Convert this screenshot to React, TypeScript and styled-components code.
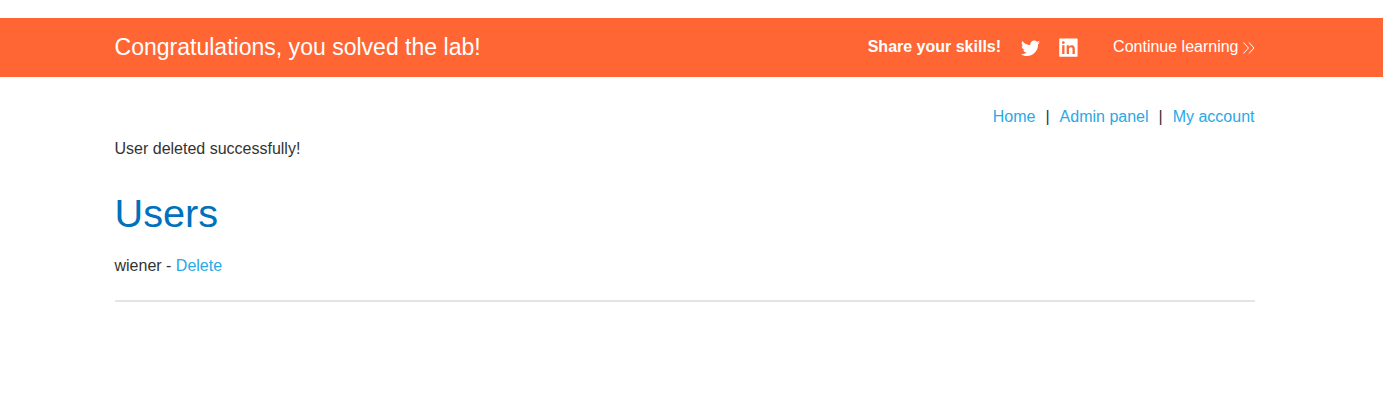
import React from 'react';
import styled, { createGlobalStyle } from 'styled-components';

const GlobalStyle = createGlobalStyle`
  * { box-sizing: border-box; }
  body {
    margin: 0;
    background: #fff;
    color: #333332;
    font: 16px/24px "Liberation Sans", Arial, sans-serif;
  }
`;

const Banner = styled.header`
  margin-top: 18px;
  height: 59px;
  background: #ff6633;
  color: #fff;
`;

const Container = styled.div`
  width: 1140px;
  margin-left: 114.5px;
`;

const BannerRow = styled(Container)`
  height: 100%;
  display: flex;
  align-items: center;
`;

const BannerTitle = styled.h4`
  margin: 0 auto 0 0;
  padding-bottom: 1px;
  font-size: 23.04px;
  font-weight: 400;
  line-height: 30px;
`;

const Share = styled.span`
  font-weight: 700;
  margin-right: 18px;
  padding-bottom: 2px;
`;

const IconLink = styled.a<{ $gap: number }>`
  display: flex;
  margin-right: ${(p) => p.$gap}px;
`;

const Continue = styled.a`
  display: flex;
  align-items: center;
  gap: 4px;
`;

const ContinueLabel = styled.span`
  padding-bottom: 2px;
`;

const Nav = styled.nav`
  display: flex;
  justify-content: flex-end;
  gap: 10px;
  padding-top: 28px;
`;

const Link = styled.a`
  color: #29a9e5;
`;

const Message = styled.p`
  margin: 8px 0 0;
`;

const Title = styled.h1`
  margin: 27px 0 0;
  color: #0071bc;
  font-size: 39.7px;
  font-weight: 400;
  line-height: 50px;
`;

const UserRow = styled.div`
  margin-top: 16px;
`;

const Rule = styled.hr`
  margin: 22px 0 0;
  border: 0;
  height: 2px;
  background: #e4e4e4;
`;

export default function App() {
  return (
    <>
      <GlobalStyle />
      <Banner>
        <BannerRow>
          <BannerTitle>Congratulations, you solved the lab!</BannerTitle>
          <Share>Share your skills!</Share>
          <IconLink $gap={17}>
            <svg width="22" height="22" viewBox="-0.5 0.3 24 24" fill="#fff">
              <path d="M22.46 6c-.77.35-1.6.58-2.46.69.88-.53 1.56-1.37 1.88-2.38-.83.5-1.75.85-2.72 1.05C18.37 4.5 17.26 4 16 4c-2.35 0-4.27 1.92-4.27 4.29 0 .34.04.67.11.98C8.28 9.09 5.11 7.38 3 4.79c-.37.63-.58 1.37-.58 2.15 0 1.49.75 2.81 1.91 3.56-.71 0-1.37-.2-1.95-.5v.03c0 2.08 1.48 3.82 3.44 4.21a4.22 4.22 0 0 1-1.93.07 4.28 4.28 0 0 0 4 2.98 8.521 8.521 0 0 1-5.33 1.84c-.34 0-.68-.02-1.02-.06C3.44 20.29 5.7 21 8.12 21 16 21 20.33 14.46 20.33 8.79c0-.19 0-.37-.01-.56.84-.6 1.56-1.36 2.14-2.23z" />
            </svg>
          </IconLink>
          <IconLink $gap={35}>
            <svg width="20" height="20" viewBox="-0.5 0.4 24 24" fill="#fff">
              <path d="M22.2 1H1.8C1.3 1 1 1.3 1 1.8v20.4c0 .5.3.8.8.8h20.4c.5 0 .8-.3.8-.8V1.8c0-.5-.3-.8-.8-.8zM7.3 19.7H4.5V9.2h2.8v10.5zM5.9 7.6a1.7 1.7 0 1 1 0-3.4 1.7 1.7 0 0 1 0 3.4zm13.8 12.1h-2.8v-5.1c0-1.4 0-3.1-1.9-3.1s-2.3 1.5-2.3 3v5.2H9.9V9.2h2.7v1.5c.4-.8 1.5-1.7 3.1-1.7 3.3 0 4 2.2 4 5v5.7z" />
            </svg>
          </IconLink>
          <Continue>
            <ContinueLabel>Continue learning</ContinueLabel>
            <svg width="12" height="14" viewBox="0 0 12 14" fill="none" stroke="#fff">
              <path d="M.5 1.5L5.5 7 .5 12.5M6 1.5L11 7 6 12.5" />
            </svg>
          </Continue>
        </BannerRow>
      </Banner>
      <Container as="main">
        <Nav>
          <Link>Home</Link>
          <span>|</span>
          <Link>Admin panel</Link>
          <span>|</span>
          <Link>My account</Link>
        </Nav>
        <Message>User deleted successfully!</Message>
        <Title>Users</Title>
        <UserRow>wiener - <Link>Delete</Link></UserRow>
        <Rule />
      </Container>
    </>
  );
}
